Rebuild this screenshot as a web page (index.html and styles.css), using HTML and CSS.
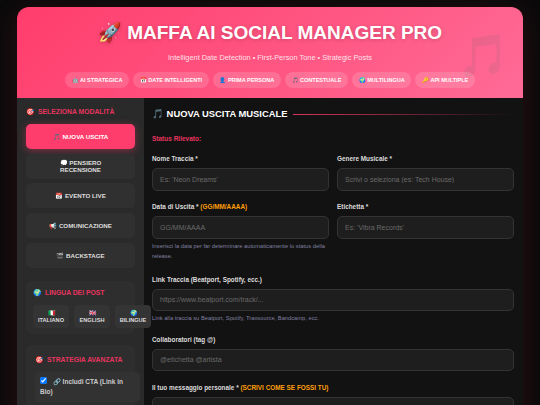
FILE: index.html
```html
<!DOCTYPE html>
<html lang="it">
<head>
<meta charset="utf-8">
<title>Maffa AI Social Manager Pro</title>
<link rel="stylesheet" href="styles.css">
</head>
<body>
<div class="app">
  <header class="hero">
    <span class="hero-note">🎵</span>
    <h1 class="hero-title">🚀 MAFFA AI SOCIAL MANAGER PRO</h1>
    <p class="hero-sub">Intelligent Date Detection • First-Person Tone • Strategic Posts</p>
    <div class="chips">
      <span class="chip">🤖 AI STRATEGICA</span>
      <span class="chip">📅 DATE INTELLIGENTI</span>
      <span class="chip">👤 PRIMA PERSONA</span>
      <span class="chip">🎵 CONTESTUALE</span>
      <span class="chip">🌍 MULTILINGUA</span>
      <span class="chip">🔑 API MULTIPLE</span>
    </div>
  </header>
  <div class="columns">
    <aside class="sidebar">
      <h3 class="side-title"><span>🎯</span>SELEZIONA MODALITÀ</h3>
      <div class="modes">
        <button class="mode mode-active">🎵 NUOVA USCITA</button>
        <button class="mode">💭 PENSIERO RECENSIONE</button>
        <button class="mode">📅 EVENTO LIVE</button>
        <button class="mode">📢 COMUNICAZIONE</button>
        <button class="mode">🎬 BACKSTAGE</button>
      </div>
      <section class="panel panel-lang">
        <h3 class="side-title"><span>🌍</span>LINGUA DEI POST</h3>
        <div class="langs">
          <button class="lang"><span>🇮🇹</span>ITALIANO</button>
          <button class="lang"><span>🇬🇧</span>ENGLISH</button>
          <button class="lang"><span>🌍</span>BILINGUE</button>
        </div>
      </section>
      <section class="panel panel-strategy">
        <h3 class="side-title"><span>🎯</span>STRATEGIA AVANZATA</h3>
        <label class="check"><input type="checkbox" checked> 🔗 Includi CTA (Link in Bio)</label>
      </section>
    </aside>
    <main class="main">
      <h2 class="main-title"><span>🎵 NUOVA USCITA MUSICALE</span><i class="rule"></i></h2>
      <div class="status">Status Rilevato:</div>
      <div class="grid">
        <div class="field">
          <label class="label">Nome Traccia *</label>
          <input class="input" placeholder="Es: 'Neon Dreams'">
        </div>
        <div class="field">
          <label class="label">Genere Musicale *</label>
          <input class="input" placeholder="Scrivi o seleziona (es: Tech House)">
        </div>
        <div class="field">
          <label class="label">Data di Uscita * <b class="accent">(GG/MM/AAAA)</b></label>
          <input class="input" placeholder="GG/MM/AAAA">
          <small class="hint">Inserisci la data per far determinare automaticamente lo status della release.</small>
        </div>
        <div class="field">
          <label class="label">Etichetta *</label>
          <input class="input" placeholder="Es: 'Vibra Records'">
        </div>
      </div>
      <div class="field">
        <label class="label">Link Traccia (Beatport, Spotify, ecc.)</label>
        <input class="input" placeholder="https://www.beatport.com/track/...">
        <small class="hint">Link alla traccia su Beatport, Spotify, Traxsource, Bandcamp, ecc.</small>
      </div>
      <div class="field">
        <label class="label">Collaboratori (tag @)</label>
        <input class="input" placeholder="@etichetta @artista">
      </div>
      <div class="field">
        <label class="label">Il tuo messaggio personale * <b class="accent">(SCRIVI COME SE FOSSI TU)</b></label>
        <textarea class="input area"></textarea>
      </div>
    </main>
  </div>
</div>
</body>
</html>
```
FILE: styles.css
```css
* { box-sizing: border-box; }
html, body { height: 405px; overflow: hidden; }
body {
  margin: 0;
  padding: 7px 17px 0;
  background: #0a0a0a;
  font-family: "Liberation Sans", "Noto Sans", sans-serif;
  color: #fff;
}
.app {
  border-radius: 12px 12px 0 0;
  box-shadow: 0 6px 30px rgba(255, 45, 85, 0.14);
  height: 600px;
  background: #121212;
}
.hero {
  position: relative;
  height: 91px;
  padding-top: 14px;
  border-radius: 12px 12px 0 0;
  background: linear-gradient(135deg, #ff3d6c 0%, #ff6b96 100%);
  text-align: center;
  overflow: hidden;
}
.hero-note {
  position: absolute;
  right: 14px;
  top: 22px;
  font-size: 42px;
  line-height: 54px;
  opacity: 0.12;
  filter: grayscale(1);
}
.hero-title {
  position: relative;
  margin: 0;
  font-size: 19px;
  line-height: 24px;
  font-weight: 700;
  text-shadow: 0 1px 4px rgba(0, 0, 0, 0.2);
}
.hero-sub {
  position: relative;
  margin: 8px 0 0;
  font-size: 7.4px;
  line-height: 10px;
  color: rgba(255, 255, 255, 0.85);
}
.chips {
  position: relative;
  display: flex;
  justify-content: center;
  gap: 4px;
  margin-top: 9px;
}
.chip {
  padding: 0 6.7px;
  height: 16px;
  line-height: 16px;
  border-radius: 9px;
  background: rgba(255, 255, 255, 0.15);
  font-size: 5.5px;
  font-weight: 700;
}
.columns { display: flex; }
.sidebar {
  position: relative;
  z-index: 1;
  width: 127px;
  flex: none;
  height: 510px;
  padding: 9px;
  background: #2a2a2a;
}
.side-title {
  display: flex;
  gap: 4px;
  margin: 0 0 7px;
  font-size: 6.8px;
  line-height: 10px;
  font-weight: 700;
  color: #e8355f;
}
.modes { display: flex; flex-direction: column; gap: 4.7px; }
.mode {
  height: 25px;
  padding: 0 15px;
  border: 0;
  border-radius: 5px;
  background: #303030;
  color: #ddd;
  font: 700 6.2px/7px "Liberation Sans", sans-serif;
}
.mode-active {
  background: #ff3d6c;
  color: #fff;
  box-shadow: 0 2px 8px rgba(255, 61, 108, 0.4);
}
.panel {
  background: #2e2e2e;
  border-radius: 6px;
}
.panel-lang { margin-top: 13px; height: 53px; padding: 7px; }
.langs { display: flex; gap: 5px; }
.lang {
  flex: none;
  width: 36px;
  height: 23px;
  padding: 0;
  border: 0;
  border-radius: 4px;
  background: #343434;
  color: #ddd;
  font: 700 5.6px/6px "Liberation Sans", sans-serif;
}
.lang span { display: block; font-size: 6px; line-height: 8px; }
.panel-strategy { margin-top: 11px; padding: 10px 9px 9px; height: 120px; }
.check {
  display: block;
  padding: 5px;
  width: 105px;
  border-radius: 4px;
  background: #323232;
  color: #ccc;
  font-size: 6.5px;
  line-height: 10px;
  font-weight: 700;
}
.check input { width: 7px; height: 7px; margin: 0 4px 0 0; }
.main {
  flex: 1;
  min-width: 0;
  padding: 9px 9px 0 8px;
  background: #121212;
}
.main-title {
  display: flex;
  align-items: center;
  gap: 5.5px;
  margin: 0;
  font-size: 9.4px;
  line-height: 14px;
  font-weight: 700;
}
.rule {
  flex: 1;
  height: 1px;
  background: linear-gradient(90deg, #d8345c, transparent);
}
.status {
  margin-top: 13px;
  font-size: 6.5px;
  line-height: 9px;
  font-weight: 700;
  color: #e8355f;
}
.grid {
  display: grid;
  grid-template-columns: 1fr 1fr;
  column-gap: 8px;
  margin-top: 11px;
  margin-bottom: 2.5px;
}
.field { margin-bottom: 11.5px; }
.label {
  display: block;
  margin-bottom: 5px;
  font-size: 6.4px;
  line-height: 9px;
  font-weight: 700;
  color: #dcdcdc;
}
.accent { color: #ff9f0a; }
.input {
  display: block;
  width: 100%;
  height: 22.5px;
  padding: 0 7px;
  border: 1px solid #333;
  border-radius: 5px;
  background: #1e1e1e;
  color: #fff;
  font: 7px "Liberation Sans", sans-serif;
}
.input::placeholder { color: #6a6a6a; }
.area { height: 60px; resize: none; }
.hint {
  display: block;
  margin-top: 2px;
  font-size: 5.75px;
  line-height: 10px;
  color: #8080a0;
}
```
